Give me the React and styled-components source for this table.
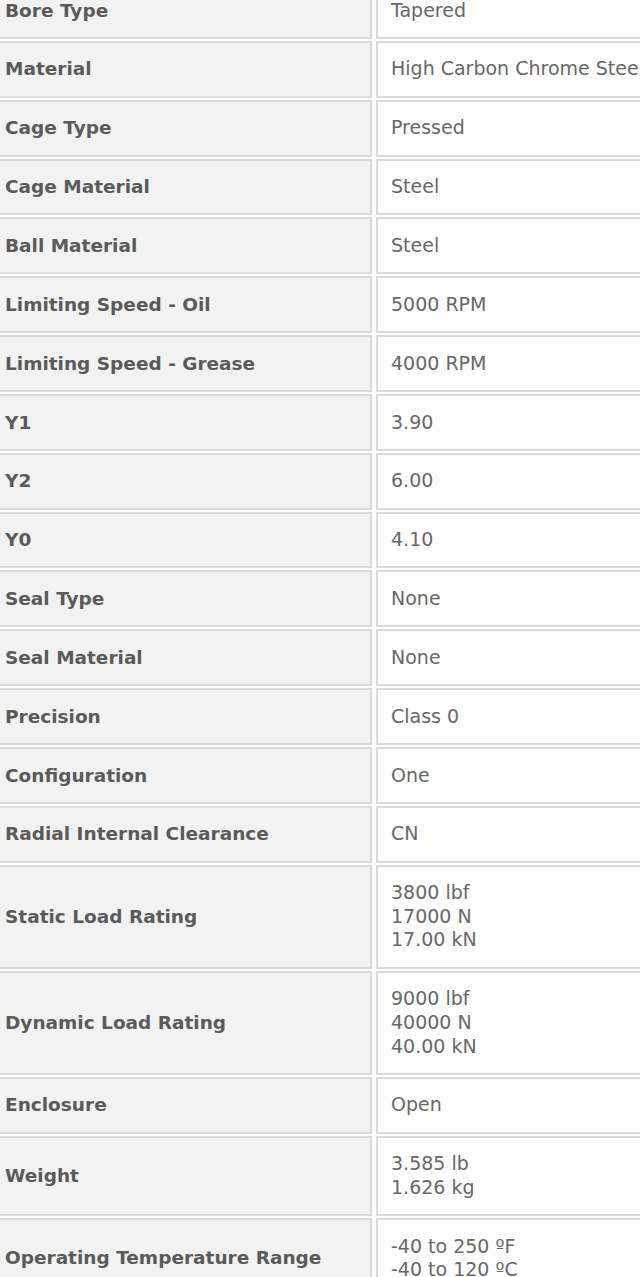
import React from 'react';
import styled, { createGlobalStyle } from 'styled-components';

const GlobalStyle = createGlobalStyle`
  html, body {
    margin: 0;
    padding: 0;
    background: #ffffff;
    overflow: hidden;
  }
`;

const StyledPage = styled.div`
  width: 640px;
  height: 1277px;
  overflow: hidden;
  background: #ffffff;`

const StyledTable = styled.table`
  margin: -20px 0 0 -14px;
  width: 820px;
  table-layout: fixed;
  border-collapse: separate;
  border-spacing: 4px 2px;
  font-family: 'DejaVu Sans', Verdana, sans-serif;
  line-height: 23.6px;`

const StyledLabel = styled.th`
  width: 352px;
  padding: 14.63px 13px;
  background: #f2f2f2;
  border: 2px solid #dadada;
  color: #5a5a5a;
  font-size: 18.5px;
  font-weight: bold;
  text-align: left;
  vertical-align: middle;
  white-space: nowrap;`

const StyledValue = styled.td`
  padding: 14.63px 13px;
  background: #fdfdfd;
  border: 2px solid #dadada;
  color: #686868;
  font-size: 19px;
  vertical-align: middle;
  white-space: nowrap;`

const specs = [
  ['Bore Type', ['Tapered']],
  ['Material', ['High Carbon Chrome Steel']],
  ['Cage Type', ['Pressed']],
  ['Cage Material', ['Steel']],
  ['Ball Material', ['Steel']],
  ['Limiting Speed - Oil', ['5000 RPM']],
  ['Limiting Speed - Grease', ['4000 RPM']],
  ['Y1', ['3.90']],
  ['Y2', ['6.00']],
  ['Y0', ['4.10']],
  ['Seal Type', ['None']],
  ['Seal Material', ['None']],
  ['Precision', ['Class 0']],
  ['Configuration', ['One']],
  ['Radial Internal Clearance', ['CN']],
  ['Static Load Rating', ['3800 lbf', '17000 N', '17.00 kN']],
  ['Dynamic Load Rating', ['9000 lbf', '40000 N', '40.00 kN']],
  ['Enclosure', ['Open']],
  ['Weight', ['3.585 lb', '1.626 kg']],
  ['Operating Temperature Range', ['-40 to 250 ºF', '-40 to 120 ºC']],
];

export default function App() {
  return (
    <StyledPage>
      <GlobalStyle />
      <StyledTable>
        <tbody>
          {
            specs.map(([label, values]) => (
              <tr key={label}>
                <StyledLabel>{label}</StyledLabel>
                <StyledValue>
                  {values.map((v, i) => <div key={i}>{v}</div>)}
                </StyledValue>
              </tr>
            ))
          }
        </tbody>
      </StyledTable>
    </StyledPage>
  )
}
